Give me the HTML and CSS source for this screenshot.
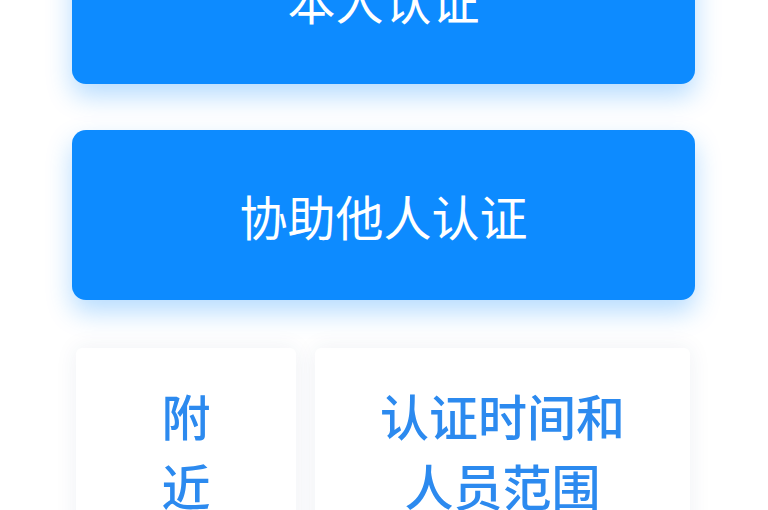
FILE: index.html
```html
<!DOCTYPE html>
<html lang="zh-CN">
<head>
    <meta charset="UTF-8">
    <meta name="viewport" content="width=device-width, initial-scale=1.0">
    <title>认证</title>
    <link rel="stylesheet" href="styles.css">
</head>
<body>
    <div class="page">
        <button class="auth-button">本人认证</button>
        <button class="auth-button">协助他人认证</button>

        <div class="info-row">
            <div class="info-card narrow">
                <p class="info-text narrow-text">附近</p>
            </div>
            <div class="info-card wide">
                <p class="info-text">认证时间和人员范围</p>
            </div>
        </div>
    </div>
</body>
</html>
```

FILE: styles.css
```css
/* Base */
:root {
    --primary-color: #0d8bff;
    --card-text: #2c8aef;
}

body {
    margin: 0;
    padding: 0;
    background-color: #ffffff;
    font-family: "Noto Sans CJK SC", "Noto Sans", sans-serif;
    overflow: hidden;
}

.page {
    display: flex;
    flex-direction: column;
    gap: 46px;
    margin-top: -86px;
    padding: 0 73px 0 72px;
}

/* Big blue buttons */
.auth-button {
    height: 170px;
    border: none;
    border-radius: 14px;
    background-color: var(--primary-color);
    color: #ffffff;
    font-family: inherit;
    font-size: 48px;
    font-weight: 400;
    box-shadow: 0 12px 26px rgba(13, 139, 255, 0.3);
    cursor: pointer;
}

/* Info cards */
.info-row {
    display: flex;
    gap: 19px;
    margin-top: 2px;
    padding: 0 5px 0 4px;
}

.info-card {
    background-color: #ffffff;
    border-radius: 6px;
    box-shadow: 0 0 22px rgba(40, 60, 110, 0.08);
    padding: 32px 45px 0;
    height: 300px;
}

.info-card.narrow {
    width: 220px;
    box-sizing: border-box;
}

.info-card.wide {
    flex: 1;
}

.info-text {
    margin: 0;
    text-align: center;
    color: var(--card-text);
    font-size: 49px;
    font-weight: 500;
    line-height: 70px;
}

.narrow-text {
    max-width: 1em;
    margin: 0 auto;
}
```
